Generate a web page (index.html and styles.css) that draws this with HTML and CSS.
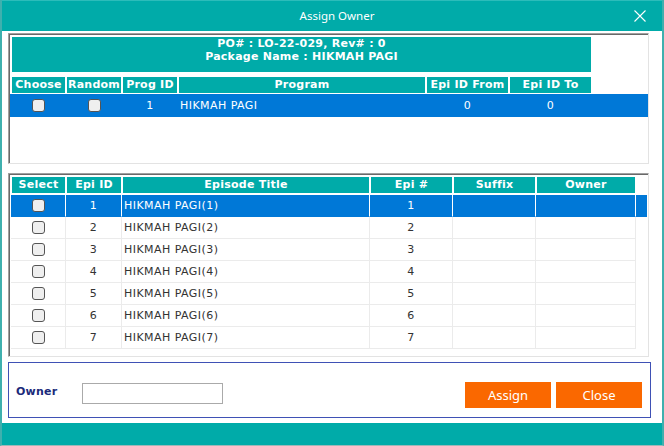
FILE: index.html
```html
<!DOCTYPE html>
<html>
<head>
<meta charset="utf-8">
<title>Assign Owner</title>
<link rel="stylesheet" href="styles.css">
</head>
<body>
<div class="window">
  <div class="titlebar">
    <span class="title">Assign Owner</span>
    <svg class="close" width="14" height="14" viewBox="0 0 14 14"><path d="M1.5 1.5 L12.5 12.5 M12.5 1.5 L1.5 12.5" stroke="#fff" stroke-width="1.1" fill="none"/></svg>
  </div>

  <div class="panel p1">
    <div class="pkg">PO# : LO-22-029, Rev# : 0<br>Package Name : HIKMAH PAGI</div>
    <div class="g1 g1-head">
      <div class="hc">Choose</div>
      <div class="hc">Random</div>
      <div class="hc">Prog ID</div>
      <div class="hc">Program</div>
      <div class="hc">Epi ID From</div>
      <div class="hc">Epi ID To</div>
    </div>
    <div class="g1 g1-row">
      <div class="dc c"><span class="cb"></span></div>
      <div class="dc c"><span class="cb"></span></div>
      <div class="dc c">1</div>
      <div class="dc l">HIKMAH PAGI</div>
      <div class="dc c">0</div>
      <div class="dc c">0</div>
    </div>
  </div>

  <div class="panel p2">
    <table class="epi">
      <colgroup>
        <col class="w55"><col class="w56"><col class="w248"><col class="w83"><col class="w83"><col class="w100"><col class="w11">
      </colgroup>
      <thead>
        <tr><th>Select</th><th>Epi ID</th><th>Episode Title</th><th>Epi #</th><th>Suffix</th><th>Owner</th><th class="x"></th></tr>
      </thead>
      <tbody>
        <tr class="sel"><td class="c"><span class="cb"></span></td><td class="c">1</td><td class="l">HIKMAH PAGI(1)</td><td class="c">1</td><td></td><td></td><td class="x"></td></tr>
        <tr><td class="c"><span class="cb"></span></td><td class="c">2</td><td class="l">HIKMAH PAGI(2)</td><td class="c">2</td><td></td><td></td><td class="x"></td></tr>
        <tr><td class="c"><span class="cb"></span></td><td class="c">3</td><td class="l">HIKMAH PAGI(3)</td><td class="c">3</td><td></td><td></td><td class="x"></td></tr>
        <tr><td class="c"><span class="cb"></span></td><td class="c">4</td><td class="l">HIKMAH PAGI(4)</td><td class="c">4</td><td></td><td></td><td class="x"></td></tr>
        <tr><td class="c"><span class="cb"></span></td><td class="c">5</td><td class="l">HIKMAH PAGI(5)</td><td class="c">5</td><td></td><td></td><td class="x"></td></tr>
        <tr><td class="c"><span class="cb"></span></td><td class="c">6</td><td class="l">HIKMAH PAGI(6)</td><td class="c">6</td><td></td><td></td><td class="x"></td></tr>
        <tr><td class="c"><span class="cb"></span></td><td class="c">7</td><td class="l">HIKMAH PAGI(7)</td><td class="c">7</td><td></td><td></td><td class="x"></td></tr>
      </tbody>
    </table>
  </div>

  <div class="actions">
    <label class="owner-label">Owner</label>
    <input class="owner-input" type="text">
    <div class="spacer"></div>
    <button class="btn">Assign</button>
    <button class="btn">Close</button>
  </div>

  <div class="footer"></div>
</div>
</body>
</html>
```

FILE: styles.css
```css
html, body {
  margin: 0;
  padding: 0;
  background: #fff;
}
body {
  font-family: "DejaVu Sans", Verdana, sans-serif;
  font-size: 11px;
  color: #333;
}
.window {
  width: 664px;
  height: 446px;
  box-sizing: border-box;
  border-left: 2px solid #3fb0ae;
  border-right: 2px solid #3fb0ae;
  border-bottom: 1px solid #9fb8b8;
  background: #fff;
  display: flex;
  flex-direction: column;
  overflow: hidden;
}
.titlebar {
  height: 31px;
  flex: none;
  margin: 0 -2px;
  background: #00aba9;
  border-top: 1px solid #2cbcba;
  box-sizing: border-box;
  position: relative;
  display: flex;
  align-items: center;
  justify-content: center;
}
.title {
  font-family: "Noto Sans", "Open Sans", sans-serif;
  font-size: 11.5px;
  color: #fff;
  padding-left: 10px;
  margin-top: -1px;
}
.close {
  position: absolute;
  right: 17px;
  top: 8px;
}

/* panels */
.panel {
  flex: none;
  margin-left: 6px;
  width: 641px;
  box-sizing: border-box;
  border-top: 1px solid #a0a0a0;
  border-left: 1px solid #a0a0a0;
  border-right: 1px solid #e3e3e3;
  border-bottom: 1px solid #e3e3e3;
  box-shadow: inset 1px 1px 0 #696969;
  background: #fff;
}
.p1 {
  margin-top: 2px;
  height: 131px;
}
.p2 {
  margin-top: 9px;
  height: 184px;
}

.pkg {
  margin: 3px 0 0 3px;
  width: 579px;
  height: 35px;
  box-sizing: border-box;
  padding-top: 1px;
  background: #00aba9;
  color: #fff;
  font-weight: bold;
  letter-spacing: 0.25px;
  text-align: center;
  line-height: 12.5px;
}

.g1 {
  display: grid;
  grid-template-columns: 55px 56px 56px 248px 83px 83px;
}
.g1-head {
  margin-top: 5px;
  padding-left: 2px;
  height: 16px;
}
.hc {
  background: #00aba9;
  background-clip: padding-box;
  border-left: 1px solid #fff;
  border-right: 1px solid #fff;
  color: #fff;
  font-weight: bold;
  letter-spacing: 0.25px;
  text-align: center;
  line-height: 16px;
  white-space: nowrap;
}
.g1-row {
  margin-top: 1px;
  margin-left: 1px;
  padding-left: 1px;
  height: 23px;
  background: #0078d7;
  color: #fff;
}
.dc {
  display: flex;
  align-items: center;
  line-height: 14px;
  letter-spacing: 0.45px;
}
.dc.c { justify-content: center; }
.dc.l { padding-left: 2px; }

.cb {
  display: inline-block;
  width: 13px;
  height: 13px;
  box-sizing: border-box;
  border: 1px solid #555;
  border-radius: 3px;
  background: #efefef;
  vertical-align: middle;
}

/* episode table */
.epi {
  margin: 2px 0 0 2px;
  border-collapse: separate;
  border-spacing: 0;
  table-layout: fixed;
  width: 636px;
}
.w55 { width: 55px; }
.w56 { width: 56px; }
.w248 { width: 248px; }
.w83 { width: 83px; }
.w100 { width: 100px; }
.w11 { width: 11px; }
.epi th {
  height: 16px;
  padding: 0;
  background: #00aba9;
  background-clip: padding-box;
  border-top: 1px solid #fff;
  border-left: 1px solid #fff;
  border-right: 1px solid #fff;
  border-bottom: 2px solid #fff;
  color: #fff;
  font-weight: bold;
  letter-spacing: 0.25px;
  line-height: 16px;
  white-space: nowrap;
}
.epi th.x {
  background: transparent;
  border: none;
}
.epi td {
  height: 21px;
  padding: 0;
  border-right: 1px solid #ebebeb;
  border-bottom: 1px solid #ebebeb;
  line-height: 14px;
  letter-spacing: 0.45px;
  white-space: nowrap;
  color: #333;
}
.epi td.c { text-align: center; }
.epi td.l { padding-left: 2px; }
.epi td.x { border: none; }
.epi tr.sel td {
  background: #0078d7;
  color: #fff;
  border-right-color: #fff;
  border-bottom-color: #0078d7;
}
.epi tr.sel td.x { border: none; }

/* actions */
.actions {
  flex: none;
  margin: 5px 0 0 6px;
  width: 643px;
  height: 56px;
  box-sizing: border-box;
  border: 1px solid #3f51b5;
  display: flex;
  align-items: flex-start;
  padding: 19px 8px 0 7px;
}
.owner-label {
  font-weight: bold;
  letter-spacing: 0.25px;
  color: #1b2a7a;
  line-height: 14px;
  margin-top: 3px;
  width: 66px;
}
.owner-input {
  margin: 1px 0 0 0;
  width: 141px;
  height: 21px;
  box-sizing: border-box;
  border: 1px solid #aaa;
  padding: 0 3px;
  background: #fff;
  outline: none;
}
.spacer { flex: 1; }
.btn {
  width: 86px;
  height: 26px;
  margin-left: 5px;
  border: none;
  padding: 0;
  background: #fa6800;
  color: #fff;
  font-family: "Noto Sans", "Open Sans", sans-serif;
  font-size: 13px;
}
.btn:first-of-type { margin-left: 0; }

.footer {
  flex: none;
  margin: 5px -2px 0 0;
  height: 22px;
  background: #00aba9;
}
```
